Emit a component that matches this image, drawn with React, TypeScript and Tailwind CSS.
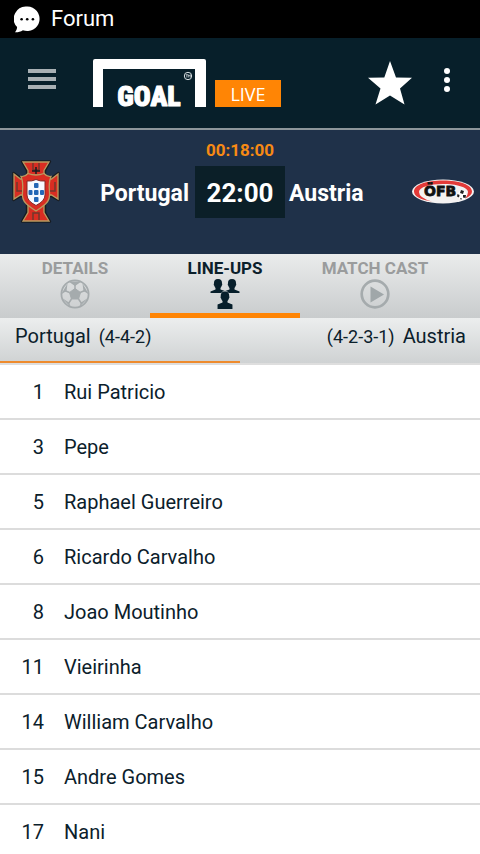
import React from "react";

const players = [
  { number: 1, name: "Rui Patricio" },
  { number: 3, name: "Pepe" },
  { number: 5, name: "Raphael Guerreiro" },
  { number: 6, name: "Ricardo Carvalho" },
  { number: 8, name: "Joao Moutinho" },
  { number: 11, name: "Vieirinha" },
  { number: 14, name: "William Carvalho" },
  { number: 15, name: "Andre Gomes" },
  { number: 17, name: "Nani" },
];

function ChatIcon() {
  return (
    <svg viewBox="0 0 26 27" className="h-[27px] w-[26px]" aria-hidden="true">
      <path d="M13.5 .5a12.3 12.3 0 1 1-4.6 23.8C6.500 25.800 3.500 26.500 1 26.300c1.300-1.600 2-3.300 2.100-5.200A12.300 12.300 0 0 1 13.500.5Z" fill="#fff" />
      <g fill="#000">
        <circle cx="7.600" cy="13.300" r="1.300" />
        <circle cx="13.200" cy="13.300" r="1.300" />
        <circle cx="18.900" cy="13.300" r="1.300" />
      </g>
    </svg>
  );
}

function GoalLogo() {
  return (
    <svg viewBox="0 0 113 48" className="h-12 w-[113px] overflow-visible" role="img" aria-label="Goal">
      <path d="M0 48V2q0-2 2-2h109q2 0 2 2v46h-11V10H10v38Z" fill="#fff" />
      <text
        x="56"
        y="47"
        textAnchor="middle"
        fontSize="28"
        fontWeight="900"
        fontFamily="'Roboto Condensed', 'Roboto', sans-serif"
        fill="#fff"
        stroke="#fff"
        strokeWidth="1"
        strokeLinejoin="round"
      >
        GOAL
      </text>
      <circle cx="95" cy="17" r="3.700" fill="none" stroke="#d8dfe2" strokeWidth="1" />
      <path d="M92.700 15.700h2.200M93.800 15.700v2.800M95.300 18.500v-2.800l1 1.500 1-1.500v2.800" fill="none" stroke="#d8dfe2" strokeWidth=".7" />
    </svg>
  );
}

function StarIcon() {
  return (
    <svg viewBox="0 0 44 44" className="size-11" aria-hidden="true">
      <path d="M22 0l6 16.500 16 .2L32 27.500 36.500 43.500 22 34.500 7.500 43.500 12.500 27.500 0 16.700l16.300-.2Z" fill="#fff" />
    </svg>
  );
}

function PortugalCrest() {
  return (
    <svg viewBox="0 0 48 63" className="h-[63px] w-12" role="img" aria-label="Portugal crest">
      <g stroke="#171b20" strokeWidth="2.400" fill="#171b20" strokeLinejoin="round">
        <path d="M10 1.500h28l-5 9v10H15v-10ZM10 61.500h28l-5-9v-10H15v10ZM1.500 13l7 5h12v18h-12l-7 4ZM46.500 13l-7 5h-12v18h12l7 4Z" />
      </g>
      <g stroke="#b99a60" strokeWidth="1.300" fill="#d92d22">
        <path d="M11 2h26l-5 8.500v10H16v-10ZM11 61h26l-5-8.500v-10H16v10ZM2 14l6.500 5h12v16h-12L2 39ZM46 14l-6.500 5h-12v16h12L46 39Z" />
        <path d="M9 16.500q4 .5 7-3 8 3 16 0 3 3.500 7 3-2.500 6-1.500 15 1 8-4 12.500-4.500 4-9.500 7-5-3-9.500-7-5-4.500-4-12.500 1-9-1.500-15Z" />
      </g>
      <path d="M21 3v7h6V3M21 60v-7h6v7M5 22v9h5M43 22v9h-5" fill="none" stroke="#72372c" strokeWidth="1.500" />
      <path d="M20 11h8M24 7v7" stroke="#171b20" strokeWidth="1.500" />
      <path d="M15 21q5 .5 9-1.500 4 2 9 1.500v14q0 6-9 10.500-9-4.500-9-10.500Z" fill="#f7faff" stroke="#822a26" strokeWidth="1" />
      <g fill="#2467b5">
        <rect x="22" y="23" width="4.500" height="5" rx="1" />
        <rect x="16.500" y="30" width="4" height="5" rx="1" />
        <rect x="22" y="30" width="4.500" height="5" rx="1" />
        <rect x="28" y="30" width="4" height="5" rx="1" />
        <rect x="22" y="37" width="4.500" height="5" rx="1" />
      </g>
    </svg>
  );
}

function AustriaBadge() {
  return (
    <svg viewBox="0 0 62 25" className="h-[25px] w-[62px]" role="img" aria-label="Austria badge">
      <ellipse cx="31" cy="12.500" rx="31" ry="12" fill="#f4f2f2" />
      <path d="M2 12.500C2 6 14 1.500 31 1.500s29 4.500 29 11q0 4-7 7 3-3 3-6.500C56 8 44 5 31 5S7 8 7 13q0 6 13 9.500C9 21 2 17.500 2 12.500Z" fill="#e33a38" />
      <text x="12" y="17" fontSize="14" fontWeight="700" fontFamily="'DejaVu Sans', sans-serif" fill="#111" stroke="#111" strokeWidth=".8">
        ÖFB
      </text>
      <circle cx="50" cy="16" r="4.500" fill="#fff" />
      <path d="M49 11l3 1-1 3-3-1ZM45.500 15l2 1-.5 2.500-2-1ZM51 16l3 0-.5 3-2.500-.5ZM48 19l2 .5-1 1.500Z" fill="#222" />
    </svg>
  );
}

function BallIcon() {
  return (
    <svg viewBox="0 0 30 30" className="size-[30px]" fill="none" stroke="#a5abad" aria-hidden="true">
      <circle cx="15" cy="15" r="13.600" strokeWidth="1.800" />
      <path d="M15 9.500l5.500 4-2 6.500h-7l-2-6.500Z" fill="#a5abad" />
      <path d="M15 10V5M20 13.500l5-2M18.500 20l3 4.500M11.500 20l-3 4.500M9.500 13.500l-5-2" strokeWidth="1.500" />
      <path d="M8.500 2.500l6.500 4.500 6.500-4.500ZM22.500 4.500l1 7.500 5.500 3.500ZM28 19l-7 4.500-2 5ZM2 19l7 4.500 2 5ZM7.500 4.500l-1 7.500L1 15.500Z" fill="#a5abad" stroke="none" />
    </svg>
  );
}

function PeopleIcon() {
  return (
    <svg viewBox="0 0 30 30" className="size-[30px]" fill="#071f2b" aria-hidden="true">
      <path d="M8 0c3 0 4.300 2 4 4.500.5.300.3 1.800-.3 2.200-.3 1-.7 1.800-1.200 2.300v1.500l4.500 1.500v2H.5v-1.500L5.500 10.500V9c-.5-.5-.9-1.300-1.200-2.300-.6-.4-.8-1.900-.3-2.200C3.700 2 5 0 8 0Z" />
      <path d="M22 0c3 0 4.300 2 4 4.500.5.300.3 1.800-.3 2.200-.3 1-.7 1.800-1.200 2.300v1.500l5 2V14H15v-2l4.500-1.500V9c-.5-.5-.9-1.300-1.200-2.300-.6-.4-.8-1.900-.3-2.200C17.700 2 19 0 22 0Z" />
      <path d="M15 12.500c3.300 0 4.500 2.200 4.200 4.800.5.400.3 1.900-.3 2.300-.3 1-.8 1.900-1.400 2.400v1.500l5 2V30h-15v-4.500l5-2V22c-.6-.5-1.100-1.400-1.400-2.400-.6-.4-.8-1.900-.3-2.300-.3-2.600.9-4.800 4.200-4.800Z" stroke="#e1e4e4" strokeWidth="1" paintOrder="stroke" />
    </svg>
  );
}

function PlayIcon() {
  return (
    <svg viewBox="0 0 30 30" className="size-[30px]" aria-hidden="true">
      <circle cx="15" cy="15" r="13.300" fill="none" stroke="#a5abad" strokeWidth="2.700" />
      <path d="M10.500 7.500v16L24 15.500Z" fill="#a0a7a9" />
    </svg>
  );
}

const tabs = [
  { label: "DETAILS", icon: <BallIcon />, active: false },
  { label: "LINE-UPS", icon: <PeopleIcon />, active: true },
  { label: "MATCH CAST", icon: <PlayIcon />, active: false },
];

export default function App() {
  return (
    <div className="h-screen overflow-hidden bg-white font-['Roboto',sans-serif] text-[#0b202b]">
      <div className="flex h-[38px] items-center gap-[11px] bg-black pl-[14px] text-white">
        <ChatIcon />
        <span className="text-[22px] leading-7">Forum</span>
      </div>

      <header className="flex h-[92px] items-center border-b-2 border-[#8d969b] bg-[#071f2a] pr-[30px] pl-7">
        <button type="button" aria-label="Menu" className="mb-2 flex w-7 flex-col gap-1">
          <span className="h-1 w-full bg-[#a8b0b4]" />
          <span className="h-1 w-full bg-[#a8b0b4]" />
          <span className="h-1 w-full bg-[#a8b0b4]" />
        </button>
        <div className="ml-[37px] flex items-end gap-[9px]">
          <GoalLogo />
          <span className="flex h-[27px] w-[66px] items-center justify-center bg-[#ff8505] font-['Open_Sans',sans-serif] text-lg text-white">
            LIVE
          </span>
        </div>
        <button type="button" aria-label="Add to favourites" className="ml-auto">
          <StarIcon />
        </button>
        <button type="button" aria-label="More options" className="mb-[6px] ml-8 flex w-[6px] flex-col gap-[3px]">
          <span className="size-[6px] rounded-full bg-white" />
          <span className="size-[6px] rounded-full bg-white" />
          <span className="size-[6px] rounded-full bg-white" />
        </button>
      </header>

      <section className="flex h-[124px] flex-col items-center bg-[#1f3149] pt-[10px] text-white">
        <p className="text-[17px] leading-5 font-bold text-[#f78a14]">00:18:00</p>
        <div className="grid w-full grid-cols-[1fr_auto_1fr] items-center px-[6px]">
          <div className="flex items-center justify-between px-[6px]">
            <PortugalCrest />
            <span className="pt-1 text-[23px] leading-7 font-bold">Portugal</span>
          </div>
          <div className="flex h-[52px] w-[90px] items-center justify-center bg-[#0b1f28] pt-1 text-[26px] font-bold">22:00</div>
          <div className="flex items-center justify-between pl-1">
            <span className="pt-1 text-[23px] leading-7 font-bold">Austria</span>
            <AustriaBadge />
          </div>
        </div>
      </section>

      <nav className="flex h-16 bg-linear-to-b from-[#eaecec] to-[#c9cccd] pr-[30px]">
        {tabs.map((tab) => (
          <button
            key={tab.label}
            type="button"
            className={
              tab.active
                ? "flex flex-1 flex-col items-center gap-px border-b-[5px] border-[#ff8505] pt-1 text-[#0b202b]"
                : "flex flex-1 flex-col items-center gap-px border-b-[5px] border-transparent pt-1 text-[#9a9c9d]"
            }
          >
            <span className="text-[17px] leading-5 font-bold">{tab.label}</span>
            {tab.icon}
          </button>
        ))}
      </nav>

      <div className="grid h-[47px] grid-cols-2 border-b-2 border-[#dedede] bg-linear-to-b from-[#eceeee] to-[#cfd2d3]">
        <button type="button" className="flex items-baseline gap-2 border-b-2 border-[#ee8b2d] pt-1 pl-[15px]">
          <span className="text-xl">Portugal</span>
          <span className="text-lg">(4-4-2)</span>
        </button>
        <button type="button" className="flex items-baseline justify-end gap-2 border-b-2 border-transparent pt-1 pr-[14px]">
          <span className="text-lg">(4-2-3-1)</span>
          <span className="text-xl">Austria</span>
        </button>
      </div>

      <ul>
        {players.map((player) => (
          <li key={player.number} className="flex h-[55px] items-center border-b-2 border-[#dcdcdc] text-xl">
            <span className="w-11 text-right">{player.number}</span>
            <span className="ml-5">{player.name}</span>
          </li>
        ))}
      </ul>
    </div>
  );
}
